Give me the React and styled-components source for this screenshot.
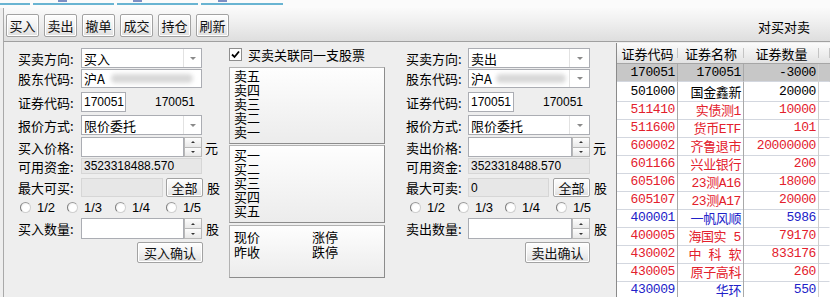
import React from "react";
import styled, { createGlobalStyle } from "styled-components";

const GlobalStyle = createGlobalStyle`
  html, body { margin: 0; padding: 0; }
  body {
    width: 830px;
    height: 297px;
    overflow: hidden;
    background: #eeeeee;
    color: #000;
    font-family: "Liberation Sans", "Noto Sans CJK SC", sans-serif;
    font-size: 13px;
  }
  * { box-sizing: border-box; }
`;

const Page = styled.div`
  width: 830px;
  height: 297px;
  display: flex;
  flex-direction: column;
  overflow: hidden;
`;

const TopStrip = styled.div`
  height: 8px;
  flex: none;
  display: flex;
  gap: 3px;
  padding-bottom: 3px;
  background: #fbfbfb;
`;

const Tab = styled.div`
  width: ${(p) => p.w}px;
  border-bottom: 2px solid #69b4d2;
  position: relative;
`;

const TabIcon = styled.span`
  position: absolute;
  left: ${(p) => p.x}px;
  top: 0;
  width: 9px;
  height: 2px;
  background: #7d8fc4;
`;

const Toolbar = styled.div`
  height: 34px;
  flex: none;
  margin-left: 3px;
  display: flex;
  align-items: flex-start;
  gap: 5px;
  padding: 6px 20px 0 2px;
  border-left: 1px solid #a9a9a9;
  border-bottom: 1px solid #a0a0a0;
  background: linear-gradient(#fafafa, #f0f0f0 40%, #dedede);
`;

const Button = styled.button`
  width: ${(p) => p.w || 33}px;
  height: ${(p) => p.h || 23}px;
  padding: 0;
  flex: none;
  border: 1px solid #a2a2a2;
  border-radius: 2px;
  background: linear-gradient(#fefefe, #f2f2f2 50%, #dfdfdf);
  font-family: "Noto Sans CJK SC", sans-serif;
  font-size: 13px;
  line-height: 1;
  color: #111;
  box-shadow: inset 0 0 0 1px #ffffff;
`;

const ToolbarTitle = styled.span`
  margin-left: auto;
  margin-top: 3px;
  font-family: "Noto Sans CJK SC", sans-serif;
  font-size: 13px;
`;

const Main = styled.div`
  flex: 1;
  margin-left: 3px;
  border-left: 1px solid #a9a9a9;
  display: flex;
  min-height: 0;
`;

const Form = styled.div`
  width: ${(p) => p.w}px;
  flex: none;
  padding-left: ${(p) => p.pl}px;
  display: flex;
  flex-direction: column;
`;

const Row = styled.div`
  display: flex;
  align-items: stretch;
  height: ${(p) => p.h}px;
  margin-top: ${(p) => p.mt}px;
  padding-left: ${(p) => p.pl || 0}px;
`;

const Label = styled.span`
  width: ${(p) => p.w}px;
  flex: none;
  display: flex;
  align-items: center;
  font-family: "Noto Sans CJK SC", sans-serif;
  font-size: 13px;
  white-space: nowrap;
`;

const Field = styled.div`
  width: ${(p) => p.w}px;
  flex: none;
  display: flex;
  align-items: center;
  background: ${(p) => (p.disabled ? "#e7e7e7" : "#ffffff")};
  border: 1px solid ${(p) => (p.disabled ? "#d6d6d6" : "#abadb3")};
  padding-left: 2px;
  font-family: ${(p) =>
    p.cjk ? '"Noto Sans CJK SC", sans-serif' : '"Liberation Sans", sans-serif'};
  font-size: ${(p) => (p.cjk ? 13 : 12)}px;
  overflow: hidden;
  white-space: nowrap;
`;

const FieldText = styled.span`
  flex: 1;
  overflow: hidden;
  display: flex;
  align-items: center;
`;

const Arrow = styled.span`
  width: ${(p) => p.w}px;
  height: 100%;
  flex: none;
  border-left: 1px solid #e2e2e2;
  display: flex;
  align-items: center;
  justify-content: center;
  &::after {
    content: "";
    border-left: 3px solid transparent;
    border-right: 3px solid transparent;
    border-top: 3px solid #8a8a8a;
  }
`;

const Blur = styled.span`
  width: ${(p) => p.w}px;
  height: 9px;
  margin-left: ${(p) => p.ml}px;
  border-radius: 5px;
  background: #d8d8d8;
  filter: blur(2px);
`;

const SideText = styled.span`
  width: ${(p) => p.w}px;
  flex: none;
  display: flex;
  align-items: center;
  justify-content: ${(p) => (p.right ? "flex-end" : "flex-start")};
  margin-left: ${(p) => p.ml || 0}px;
  font-family: ${(p) =>
    p.num ? '"Liberation Sans", sans-serif' : '"Noto Sans CJK SC", sans-serif'};
  font-size: ${(p) => (p.num ? 12 : 13)}px;
`;

const Spinner = styled.div`
  width: 18px;
  flex: none;
  display: flex;
  flex-direction: column;
  border: 1px solid #b8b8b8;
  background: #f4f4f4;
`;

const SpinHalf = styled.span`
  flex: 1;
  display: flex;
  align-items: center;
  justify-content: center;
  border-top: ${(p) => (p.down ? "1px solid #b8b8b8" : "none")};
  background: linear-gradient(#fdfdfd, #e8e8e8);
  &::after {
    content: "";
    border-left: 2px solid transparent;
    border-right: 2px solid transparent;
    ${(p) =>
      p.down ? "border-top: 2px solid #333;" : "border-bottom: 2px solid #333;"}
  }
`;

const RadioGroup = styled.div`
  width: ${(p) => p.w}px;
  flex: none;
  display: flex;
  align-items: center;
  gap: 6px;
  font-family: "Liberation Sans", sans-serif;
  font-size: 13px;
`;

const RadioDot = styled.span`
  width: 11px;
  height: 11px;
  flex: none;
  border-radius: 50%;
  border: 1px solid #d0d0d0;
  border-left-color: #7c7c7c;
  border-top-color: #9a9a9a;
  background: radial-gradient(circle at 60% 60%, #ffffff 45%, #e2e2e2);
`;

const Middle = styled.div`
  width: 170px;
  flex: none;
  padding-left: 9px;
  display: flex;
  flex-direction: column;
`;

const CheckRow = styled.div`
  display: flex;
  align-items: center;
  gap: 6px;
  height: 13px;
  margin-top: 6px;
  font-family: "Noto Sans CJK SC", sans-serif;
  font-size: 13px;
`;

const CheckBox = styled.span`
  width: 13px;
  height: 13px;
  flex: none;
  border: 1px solid #8e8e8e;
  background: #fff;
  display: flex;
  align-items: center;
  justify-content: center;
`;

const QuoteBox = styled.div`
  width: 156px;
  height: ${(p) => p.h}px;
  margin-top: ${(p) => p.mt}px;
  padding: ${(p) => p.pt}px 0 0 4px;
  border: 1px solid #b2b2b2;
  border-right-color: #8c8c8c;
  border-bottom-color: #8c8c8c;
  background: linear-gradient(#fefefe, #f3f3f3 60%, #ececec);
  font-family: "Noto Sans CJK SC", sans-serif;
  font-size: 13px;
  line-height: ${(p) => p.lh}px;
  display: ${(p) => (p.grid ? "grid" : "block")};
  grid-template-columns: 78px 1fr;
  align-content: start;
`;

const QuoteLine = styled.div`
  white-space: nowrap;
`;

const Table = styled.div`
  flex: 1;
  margin-top: 1px;
  border-left: 1px solid #8a8a8a;
  background: #ffffff;
  display: flex;
  flex-direction: column;
  overflow: hidden;
`;

const GridRow = styled.div`
  display: grid;
  grid-template-columns: 61px 66px 75px 1fr;
  height: ${(p) => p.h}px;
  flex: none;
  background: ${(p) => p.bg || "transparent"};
`;

const HeadCell = styled.div`
  display: flex;
  align-items: center;
  justify-content: center;
  position: relative;
  background: linear-gradient(#fbfbfb, #eeeeee 55%, #e2e2e2);
  border-bottom: 1px solid #a6a6a6;
  font-family: "Noto Sans CJK SC", sans-serif;
  font-size: 13px;
  &::after {
    content: "";
    position: absolute;
    right: 0;
    top: 5px;
    bottom: 5px;
    width: 1px;
    background: #c4c4c4;
  }
`;

const Cell = styled.div`
  display: flex;
  align-items: center;
  justify-content: flex-end;
  padding-right: 2px;
  border-right: 1px solid ${(p) => p.line || "#a9a9a9"};
  border-bottom: 1px solid #d3d7df;
  color: ${(p) => p.color};
  font-family: "Liberation Mono", "Noto Sans CJK SC", monospace;
  font-size: 13px;
  letter-spacing: -0.4px;
  white-space: pre;
`;

const colors = {
  sel: "#000000",
  black: "#000000",
  red: "#e3202c",
  blue: "#2121c8",
};

const holdings = [
  ["170051", "170051", "-3000", "sel"],
  ["501000", "国金鑫新", "20000", "black"],
  ["511410", "实债测1", "10000", "red"],
  ["511600", "货币ETF", "101", "red"],
  ["600002", "齐鲁退市", "20000000", "red"],
  ["601166", "兴业银行", "200", "red"],
  ["605106", "23测A16", "18000", "red"],
  ["605107", "23测A17", "20000", "red"],
  ["400001", "一帆风顺", "5986", "blue"],
  ["400005", "海国实 5", "79170", "red"],
  ["430002", "中 科 软", "833176", "red"],
  ["430005", "原子高科", "260", "red"],
  ["430009", "华环", "550", "blue"],
];

function Select({ w, value, arrow = 17, children }) {
  return (
    <Field w={w} cjk>
      <FieldText>{children || value}</FieldText>
      {arrow > 0 && <Arrow w={arrow} />}
    </Field>
  );
}

function SpinInput({ w }) {
  return (
    <>
      <Field w={w} />
      <Spinner>
        <SpinHalf />
        <SpinHalf down />
      </Spinner>
    </>
  );
}

function TradeForm({ side }) {
  const buy = side === "buy";
  const lw = buy ? 63 : 62;
  const fw = buy ? 121 : 122;
  const radios = buy ? [47, 48, 51, 40] : [48, 47, 51, 40];
  return (
    <Form w={buy ? 216 : 226} pl={buy ? 14 : 16}>
      <Row h={20} mt={6}>
        <Label w={lw}>买卖方向:</Label>
        <Select w={fw} value={buy ? "买入" : "卖出"} arrow={buy ? 18 : 20} />
      </Row>
      <Row h={19} mt={1}>
        <Label w={lw}>股东代码:</Label>
        <Select w={fw} arrow={buy ? 0 : 20}>
          沪A
          <Blur w={buy ? 82 : 70} ml={buy ? 6 : 4} />
        </Select>
      </Row>
      <Row h={20} mt={4}>
        <Label w={lw}>证券代码:</Label>
        <Field w={buy ? 45 : 46}>170051</Field>
        <SideText num right w={buy ? 69 : 69}>
          170051
        </SideText>
      </Row>
      <Row h={20} mt={3}>
        <Label w={lw}>报价方式:</Label>
        <Select w={fw} value="限价委托" arrow={buy ? 18 : 20} />
      </Row>
      <Row h={20} mt={2}>
        <Label w={lw}>{buy ? "买入价格:" : "卖出价格:"}</Label>
        <SpinInput w={fw - 18} />
        <SideText w={16} ml={3}>
          元
        </SideText>
      </Row>
      <Row h={16} mt={1}>
        <Label w={lw}>可用资金:</Label>
        <Field w={fw} disabled>
          3523318488.570
        </Field>
      </Row>
      <Row h={19} mt={4}>
        <Label w={lw}>{buy ? "最大可买:" : "最大可卖:"}</Label>
        <Field w={buy ? 82 : 81} disabled>
          {buy ? "" : "0"}
        </Field>
        <Button w={37} h={19} style={{ marginLeft: buy ? 3 : 4 }}>
          全部
        </Button>
        <SideText w={16} ml={4}>
          股
        </SideText>
      </Row>
      <Row h={14} mt={3} pl={buy ? 2 : 4}>
        {["1/2", "1/3", "1/4", "1/5"].map((r, i) => (
          <RadioGroup key={r} w={radios[i]}>
            <RadioDot />
            {r}
          </RadioGroup>
        ))}
      </Row>
      <Row h={21} mt={4}>
        <Label w={lw}>{buy ? "买入数量:" : "卖出数量:"}</Label>
        <SpinInput w={fw - 18} />
        <SideText w={16} ml={4}>
          股
        </SideText>
      </Row>
      <Row h={21} mt={3} pl={119}>
        <Button w={buy ? 66 : 65} h={21}>
          {buy ? "买入确认" : "卖出确认"}
        </Button>
      </Row>
    </Form>
  );
}

function QuotePanel() {
  return (
    <Middle>
      <CheckRow>
        <CheckBox>
          <svg width="9" height="9" viewBox="0 0 9 9">
            <path d="M1 4.5 L3.5 7 L8 1.5" fill="none" stroke="#000" strokeWidth="1.8" />
          </svg>
        </CheckBox>
        买卖关联同一支股票
      </CheckRow>
      <QuoteBox h={77} mt={6} pt={1} lh={14}>
        {["卖五", "卖四", "卖三", "卖二", "卖一"].map((t) => (
          <QuoteLine key={t}>{t}</QuoteLine>
        ))}
      </QuoteBox>
      <QuoteBox h={78} mt={1} pt={2} lh={14}>
        {["买一", "买二", "买三", "买四", "买五"].map((t) => (
          <QuoteLine key={t}>{t}</QuoteLine>
        ))}
      </QuoteBox>
      <QuoteBox h={53} mt={2} pt={3} lh={15} grid>
        <QuoteLine>现价</QuoteLine>
        <QuoteLine>涨停</QuoteLine>
        <QuoteLine>昨收</QuoteLine>
        <QuoteLine>跌停</QuoteLine>
      </QuoteBox>
    </Middle>
  );
}

function HoldingsTable() {
  return (
    <Table>
      <GridRow h={21}>
        <HeadCell>证券代码</HeadCell>
        <HeadCell>证券名称</HeadCell>
        <HeadCell>证券数量</HeadCell>
        <HeadCell />
      </GridRow>
      {holdings.map(([code, name, qty, kind]) => (
        <GridRow key={code} h={18} bg={kind === "sel" ? "#c7c7c7" : undefined}>
          <Cell color={colors[kind]}>{code}</Cell>
          <Cell color={colors[kind]}>{name}</Cell>
          <Cell color={colors[kind]} line="#cfcfcf">
            {qty}
          </Cell>
          <Cell line="transparent" />
        </GridRow>
      ))}
    </Table>
  );
}

export default function App() {
  return (
    <Page>
      <GlobalStyle />
      <TopStrip>
        <Tab w={30} />
        <Tab w={81}>
          <TabIcon x={25} />
        </Tab>
        <Tab w={81}>
          <TabIcon x={16} />
        </Tab>
        <Tab w={82}>
          <TabIcon x={17} />
        </Tab>
      </TopStrip>
      <Toolbar>
        {["买入", "卖出", "撤单", "成交", "持仓", "刷新"].map((t) => (
          <Button key={t}>{t}</Button>
        ))}
        <ToolbarTitle>对买对卖</ToolbarTitle>
      </Toolbar>
      <Main>
        <TradeForm side="buy" />
        <QuotePanel />
        <TradeForm side="sell" />
        <HoldingsTable />
      </Main>
    </Page>
  );
}
